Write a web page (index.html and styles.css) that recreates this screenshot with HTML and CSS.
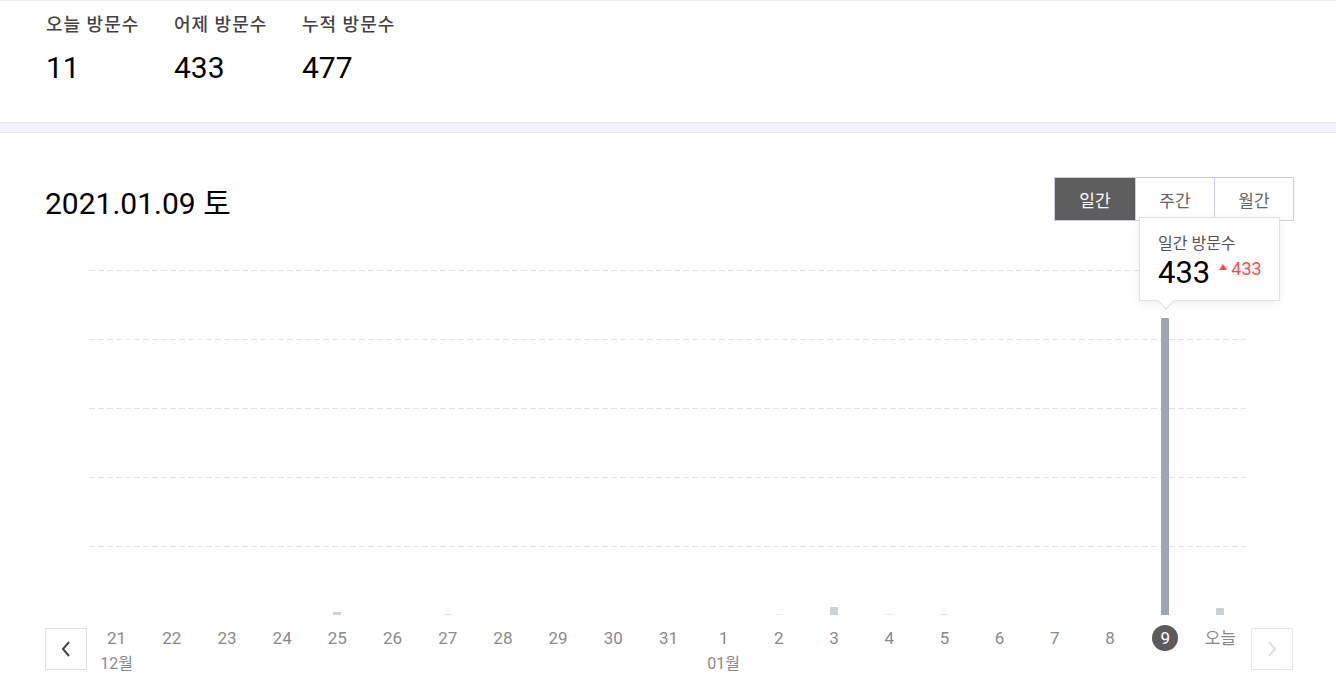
FILE: index.html
```html
<!DOCTYPE html>
<html lang="ko">
<head>
<meta charset="utf-8">
<title>방문 통계</title>
<link rel="stylesheet" href="styles.css">
</head>
<body>
<section class="stats">
  <div class="stat">
    <div class="stat-label">오늘 방문수</div>
    <div class="stat-value">11</div>
  </div>
  <div class="stat">
    <div class="stat-label">어제 방문수</div>
    <div class="stat-value">433</div>
  </div>
  <div class="stat">
    <div class="stat-label">누적 방문수</div>
    <div class="stat-value">477</div>
  </div>
</section>
<div class="band"></div>
<section class="chart-section">
  <div class="chart-header">
    <h2 class="chart-title">2021.01.09 토</h2>
    <div class="period-tabs">
      <button class="tab active">일간</button>
      <button class="tab">주간</button>
      <button class="tab">월간</button>
    </div>
  </div>
  <div class="chart-grid">
    <div class="plot">
      <div class="gridlines">
        <div class="gline"></div><div class="gline"></div><div class="gline"></div><div class="gline"></div><div class="gline"></div>
      </div>
      <div class="bars">
        <div class="col"><span class="bar" style="height:0px"></span></div>
        <div class="col"><span class="bar" style="height:0px"></span></div>
        <div class="col"><span class="bar" style="height:0px"></span></div>
        <div class="col"><span class="bar" style="height:0px"></span></div>
        <div class="col"><span class="bar" style="height:3px"></span></div>
        <div class="col"><span class="bar" style="height:0px"></span></div>
        <div class="col"><span class="bar faint" style="height:1px"></span></div>
        <div class="col"><span class="bar" style="height:0px"></span></div>
        <div class="col"><span class="bar" style="height:0px"></span></div>
        <div class="col"><span class="bar" style="height:0px"></span></div>
        <div class="col"><span class="bar" style="height:0px"></span></div>
        <div class="col"><span class="bar" style="height:0px"></span></div>
        <div class="col"><span class="bar faint pink" style="height:1px"></span></div>
        <div class="col"><span class="bar" style="height:8px"></span></div>
        <div class="col"><span class="bar faint pink" style="height:1px"></span></div>
        <div class="col"><span class="bar faint" style="height:1px"></span></div>
        <div class="col"><span class="bar" style="height:0px"></span></div>
        <div class="col"><span class="bar" style="height:0px"></span></div>
        <div class="col"><span class="bar" style="height:0px"></span></div>
        <div class="col"><span class="bar selected" style="height:297px"></span></div>
        <div class="col"><span class="bar" style="height:7px"></span></div>
      </div>
      <div class="tooltip">
        <div class="tt-label">일간 방문수</div>
        <div class="tt-row">
          <span class="tt-value">433</span>
          <span class="tt-diff"><span class="tt-arrow"></span>433</span>
        </div>
      </div>
    </div>
    <button class="nav prev" aria-label="이전">
      <svg width="12" height="18" viewBox="0 0 12 18"><path d="M9 2 L3 9 L9 16" fill="none" stroke="#444" stroke-width="2"/></svg>
    </button>
    <div class="axis">
      <div class="day"><span class="d">21</span><span class="m">12월</span></div>
      <div class="day"><span class="d">22</span></div>
      <div class="day"><span class="d">23</span></div>
      <div class="day"><span class="d">24</span></div>
      <div class="day"><span class="d">25</span></div>
      <div class="day"><span class="d">26</span></div>
      <div class="day"><span class="d">27</span></div>
      <div class="day"><span class="d">28</span></div>
      <div class="day"><span class="d">29</span></div>
      <div class="day"><span class="d">30</span></div>
      <div class="day"><span class="d">31</span></div>
      <div class="day"><span class="d">1</span><span class="m">01월</span></div>
      <div class="day"><span class="d">2</span></div>
      <div class="day"><span class="d">3</span></div>
      <div class="day"><span class="d">4</span></div>
      <div class="day"><span class="d">5</span></div>
      <div class="day"><span class="d">6</span></div>
      <div class="day"><span class="d">7</span></div>
      <div class="day"><span class="d">8</span></div>
      <div class="day"><span class="d current">9</span></div>
      <div class="day"><span class="d">오늘</span></div>
    </div>
    <button class="nav next" aria-label="다음" disabled>
      <svg width="12" height="18" viewBox="0 0 12 18"><path d="M3 2 L9 9 L3 16" fill="none" stroke="#dde1e7" stroke-width="2"/></svg>
    </button>
  </div>
</section>
</body>
</html>
```

FILE: styles.css
```css
* { box-sizing: border-box; }
html, body { margin: 0; padding: 0; background: #fff; }
body {
  font-family: Roboto, "Noto Sans CJK KR", sans-serif;
  color: #000;
  overflow: hidden;
}

.stats {
  display: flex;
  height: 122px;
  border-top: 1px solid #eef0f3;
  padding: 12px 0 0 46px;
}
.stat { width: 128px; }
.stat-label {
  font-size: 18px;
  line-height: 24px;
  letter-spacing: 1px;
  font-weight: 500;
  color: #444;
}
.stat-value {
  margin-top: 12px;
  font-size: 30px;
  line-height: 38px;
  color: #000;
}

.band {
  height: 11px;
  background: #f3f4f7;
  border-top: 1px solid #e2e6ed;
  border-bottom: 1px solid #e2e6ed;
}

.chart-section {
  padding: 44px 0 0 45px;
}
.chart-header {
  display: flex;
  justify-content: space-between;
  align-items: center;
  width: 1249px;
  height: 44px;
}
.chart-title {
  margin: 0;
  padding-top: 10px;
  font-size: 30px;
  font-weight: normal;
  line-height: 36px;
  color: #000;
}
.period-tabs {
  display: flex;
  border: 1px solid #c8cfdb;
}
.tab {
  width: 79px;
  height: 42px;
  border: 0;
  border-left: 1px solid #c8cfdb;
  background: #fff;
  font-family: inherit;
  font-size: 17px;
  color: #666;
  padding: 0;
}
.tab:first-child { border-left: 0; width: 80px; }
.tab.active { background: #5e5e5e; color: #fff; }

.chart-grid {
  display: grid;
  grid-template-columns: 42px 1159px 42px;
  column-gap: 2px;
  margin-top: 49px;
}
.plot {
  grid-column: 2;
  grid-row: 1;
  position: relative;
  height: 345px;
}
.gridlines {
  position: absolute;
  inset: 0;
  display: flex;
  flex-direction: column;
}
.gline {
  height: 69px;
  margin-right: 2px;
  background-image: linear-gradient(to right, #e2e3e5 6px, transparent 6px);
  background-size: 9px 1px;
  background-repeat: repeat-x;
  background-position: 0 0;
}
.bars {
  position: relative;
  display: grid;
  grid-template-columns: repeat(21, 1fr);
  height: 100%;
}
.col {
  display: flex;
  justify-content: center;
  align-items: flex-end;
}
.bar {
  display: block;
  width: 8px;
  background: #cdd2d8;
  border-radius: 1px 1px 0 0;
}
.bar.faint { background: #e6e8eb; }
.bar.faint.pink { background: #f7e6ea; }
.bar.selected { background: #9ea7b1; }

.tooltip {
  position: absolute;
  left: 1050px;
  top: -53px;
  width: 141px;
  height: 84px;
  padding: 15px 0 0 18px;
  background: #fff;
  border: 1px solid #dde2eb;
  box-shadow: 0 3px 10px rgba(0, 0, 0, 0.06);
}
.tooltip::after {
  content: "";
  position: absolute;
  left: 20px;
  bottom: -7px;
  width: 11px;
  height: 11px;
  background: #fff;
  border-right: 1px solid #dde2eb;
  border-bottom: 1px solid #dde2eb;
  transform: rotate(45deg);
}
.tt-label {
  font-size: 16px;
  line-height: 22px;
  color: #555;
}
.tt-row {
  display: flex;
  align-items: flex-start;
}
.tt-value {
  font-size: 31px;
  line-height: 36px;
  color: #000;
}
.tt-diff {
  display: flex;
  align-items: center;
  margin: 2px 0 0 9px;
  font-size: 18px;
  line-height: 24px;
  color: #ff4d4d;
}
.tt-arrow {
  width: 0;
  height: 0;
  border-left: 4px solid transparent;
  border-right: 4px solid transparent;
  border-bottom: 6px solid #ff4d4d;
  margin-right: 4px;
  margin-top: -4px;
}

.nav {
  grid-row: 2;
  margin-top: 13px;
  width: 42px;
  height: 42px;
  padding: 0;
  background: #fff;
  border: 1px solid #dcdfe6;
  display: flex;
  align-items: center;
  justify-content: center;
}
.nav.prev { grid-column: 1; }
.nav.next { grid-column: 3; margin-left: 1px; border-color: #e4e7ed; }

.axis {
  grid-column: 2;
  grid-row: 2;
  display: grid;
  grid-template-columns: repeat(21, 1fr);
  padding-top: 10px;
}
.day {
  display: flex;
  flex-direction: column;
  align-items: center;
}
.d {
  height: 26px;
  min-width: 26px;
  line-height: 26px;
  text-align: center;
  font-size: 17px;
  color: #8a8a8a;
}
.d.current {
  background: #5b5b5b;
  color: #fff;
  border-radius: 50%;
}
.m {
  margin-top: 3px;
  font-size: 16px;
  line-height: 20px;
  color: #8a8a8a;
}
```
